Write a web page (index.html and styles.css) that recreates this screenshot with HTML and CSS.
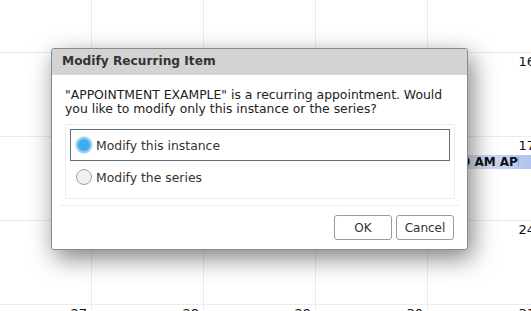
FILE: index.html
```html
<!DOCTYPE html>
<html lang="en">
<head>
  <meta charset="UTF-8">
  <title>Modify Recurring Item</title>
  <link rel="stylesheet" href="styles.css">
</head>
<body>
  <div class="calendar">
    <div class="cell"></div><div class="cell"></div><div class="cell"></div><div class="cell"></div><div class="cell"></div>
    <div class="cell"></div><div class="cell"></div><div class="cell"></div><div class="cell"></div><div class="cell"><span class="day">16</span></div>
    <div class="cell"></div><div class="cell"></div><div class="cell"></div><div class="cell"></div>
    <div class="cell"><span class="day">17</span><div class="event"><span class="event-text">10:00 AM APPOINTMENT EXAMPLE</span></div></div>
    <div class="cell"></div><div class="cell"></div><div class="cell"></div><div class="cell"></div><div class="cell"><span class="day">24</span></div>
    <div class="cell"><span class="day">27</span></div><div class="cell"><span class="day">28</span></div><div class="cell"><span class="day">29</span></div><div class="cell"><span class="day">30</span></div><div class="cell"><span class="day">31</span></div>
  </div>

  <div class="dialog">
    <div class="dialog-title">Modify Recurring Item</div>
    <div class="dialog-body">
      <p class="message">"APPOINTMENT EXAMPLE" is a recurring appointment. Would you like to modify only this instance or the series?</p>
      <div class="choices">
        <label class="choice selected"><span class="radio checked"></span>Modify this instance</label>
        <label class="choice"><span class="radio"></span>Modify the series</label>
      </div>
    </div>
    <div class="dialog-buttons">
      <button class="btn">OK</button>
      <button class="btn">Cancel</button>
    </div>
  </div>
</body>
</html>
```

FILE: styles.css
```css
body {
  margin: 0;
  font-family: "DejaVu Sans", sans-serif;
  font-size: 12px;
  color: #222;
  background-color: #fff;
  overflow: hidden;
  height: 311px;
}
.calendar {
  display: grid;
  grid-template-columns: repeat(5, 112px);
  grid-template-rows: repeat(5, 84px);
  margin-left: -21px;
  margin-top: -32px;
  width: 560px;
}
.cell {
  position: relative;
  border-left: 1px solid #ececec;
  border-top: 1px solid #ececec;
  text-align: right;
  padding: 1px 4px 0 0;
  font-size: 13px;
  color: #111;
}
.event {
  position: absolute;
  left: 0;
  right: 0;
  top: 18px;
  height: 14px;
  padding-left: 4px;
  text-align: left;
  font-weight: bold;
  font-size: 12px;
  line-height: 14px;
  background: linear-gradient(to right, #f6f7fb, #cbd8f2 55%, #a9c0ef);
}
.event-text {
  display: block;
  width: 87px;
  white-space: nowrap;
  overflow: hidden;
}
.dialog {
  position: absolute;
  left: 51px;
  top: 48px;
  width: 415px;
  height: 200px;
  border: 1px solid #8a8a8a;
  border-radius: 3px;
  background-color: #fff;
  box-shadow: 4px 8px 24px rgba(0, 0, 0, 0.5);
  display: flex;
  flex-direction: column;
}
.dialog-title {
  background-color: #d3d3d3;
  height: 26px;
  line-height: 24px;
  padding-left: 10px;
  font-weight: bold;
  font-size: 12.2px;
  color: #333;
  border-radius: 2px 2px 0 0;
}
.dialog-body {
  padding: 13px 12px 0 13px;
}
.message {
  margin: 0 0 8px;
  line-height: 14px;
  font-size: 12.4px;
}
.choices {
  border: 1px solid #eeeeee;
  padding: 4px 4px 5px;
  display: flex;
  flex-direction: column;
}
.choice {
  display: flex;
  align-items: center;
  height: 30px;
  padding-left: 5px;
  border: 1px solid transparent;
  font-size: 12.4px;
  color: #333;
}
.choice.selected {
  border-color: #5b7081;
}
.radio {
  width: 16px;
  height: 16px;
  border-radius: 50%;
  border: 1px solid #a0a0a0;
  background-color: #eff0f1;
  margin-right: 4px;
  box-sizing: border-box;
}
.radio.checked {
  border: 2px solid #93cef0;
  background-color: #3daee9;
  box-shadow: 0 0 0 1px #d2ebf9;
}
.dialog-buttons {
  margin: auto 8px 0 8px;
  border-top: 1px solid #eeeeee;
  padding: 9px 5px 9px 0;
  display: flex;
  justify-content: flex-end;
  gap: 4px;
}
.btn {
  width: 58px;
  height: 25px;
  border: 1px solid #9c9c9c;
  border-radius: 3px;
  background-color: #fff;
  font-family: "DejaVu Sans", sans-serif;
  font-size: 12px;
  color: #333;
  padding: 0;
}
```
